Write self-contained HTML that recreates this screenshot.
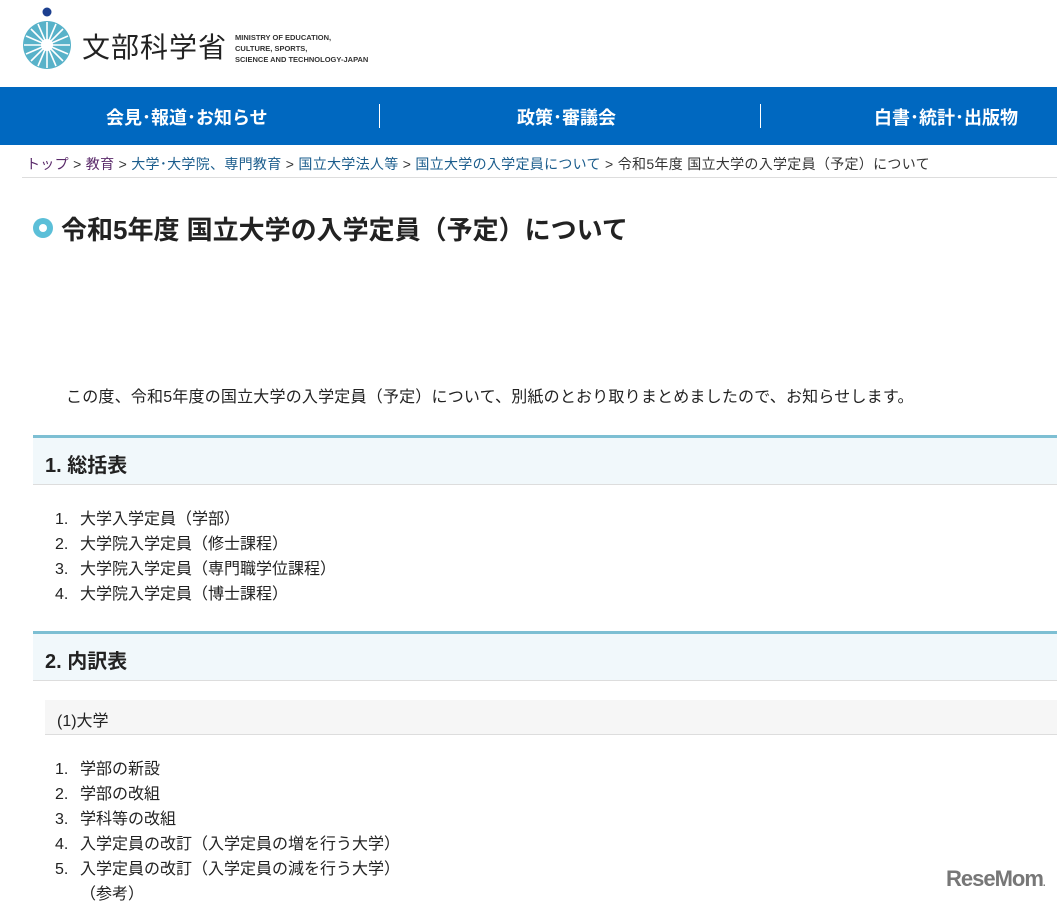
<!DOCTYPE html>
<html><head><meta charset="utf-8"><style>
*{margin:0;padding:0;box-sizing:border-box}
body{width:1057px;height:902px;overflow:hidden;background:#fff;font-family:"Liberation Sans","Noto Sans CJK JP",sans-serif;color:#222;position:relative}
.abs{position:absolute}
.nav{top:87px;left:0;width:1057px;height:58px;background:#0068c0}
.nav span{position:absolute;top:17px;color:#fff;font-size:18px;font-weight:bold}
.sep{position:absolute;top:17px;width:1px;height:24px;background:#fff}
.bc{top:154px;left:26px;font-size:14px;letter-spacing:0.3px;color:#333;white-space:nowrap}
.bc a{color:#1a5c8c;text-decoration:none}
.bc .v{color:#5a2a6a}
.h2{left:33px;width:1024px;height:50px;border-top:3px solid #7dbfd3;background:#f1f8fb;border-bottom:1px solid #ddd;font-size:20px;font-weight:bold;padding:11px 0 0 12px;color:#222}
.li{left:55px;font-size:16px;color:#222;white-space:nowrap}
.li b{font-weight:normal;display:inline-block;width:25px}
</style></head><body>
<svg class="abs" style="left:22px;top:5px" width="52" height="66" viewBox="0 0 52 66">
<circle cx="25" cy="7" r="4.5" fill="#1c3f8f"/>
<circle cx="25" cy="40" r="24" fill="#58b2c9"/>
<g stroke="#fff" stroke-width="1.6">
<line x1="25" y1="17" x2="25" y2="63"/><line x1="2" y1="40" x2="48" y2="40"/>
<line x1="9" y1="24" x2="41" y2="56"/><line x1="41" y1="24" x2="9" y2="56"/>
<line x1="16" y1="19" x2="34" y2="61"/><line x1="34" y1="19" x2="16" y2="61"/>
<line x1="4" y1="31" x2="46" y2="49"/><line x1="46" y1="31" x2="4" y2="49"/>
</g><circle cx="25" cy="40" r="6" fill="#fff"/>
</svg>
<div class="abs" style="left:82px;top:26px;font-size:28px;letter-spacing:1px;color:#222">文部科学省</div>
<div class="abs" style="left:235px;top:32px;font-size:7.5px;line-height:11px;font-weight:bold;color:#333">MINISTRY OF EDUCATION,<br>CULTURE, SPORTS,<br>SCIENCE AND TECHNOLOGY-JAPAN</div>
<div class="abs nav">
<span style="left:106px">会見･報道･お知らせ</span>
<div class="sep" style="left:379px"></div>
<span style="left:517px">政策･審議会</span>
<div class="sep" style="left:760px"></div>
<span style="left:874px">白書･統計･出版物</span>
</div>
<div class="abs bc"><span class="v">トップ</span> &gt; <span class="v">教育</span> &gt; <a>大学･大学院、専門教育</a> &gt; <a>国立大学法人等</a> &gt; <a>国立大学の入学定員について</a> &gt; 令和5年度 国立大学の入学定員（予定）について</div>
<div class="abs" style="top:177px;left:22px;width:1035px;height:1px;background:#ddd"></div>
<div class="abs" style="left:33px;top:218px;width:20px;height:20px;border-radius:50%;background:#5bbfd8"></div>
<div class="abs" style="left:39px;top:224px;width:8px;height:8px;border-radius:50%;background:#fff"></div>
<div class="abs" style="left:61px;top:210px;font-size:26px;font-weight:bold;color:#222;white-space:nowrap">令和5年度 国立大学の入学定員（予定）について</div>
<div class="abs" style="left:66px;top:383px;font-size:16px;letter-spacing:0.2px;white-space:nowrap">この度、令和5年度の国立大学の入学定員（予定）について、別紙のとおり取りまとめましたので、お知らせします。</div>
<div class="abs h2" style="top:435px">1. 総括表</div>
<div class="abs li" style="top:505px"><b>1.</b>大学入学定員（学部）</div>
<div class="abs li" style="top:530px"><b>2.</b>大学院入学定員（修士課程）</div>
<div class="abs li" style="top:555px"><b>3.</b>大学院入学定員（専門職学位課程）</div>
<div class="abs li" style="top:580px"><b>4.</b>大学院入学定員（博士課程）</div>
<div class="abs h2" style="top:631px">2. 内訳表</div>
<div class="abs" style="left:45px;top:700px;width:1012px;height:35px;background:#f6f6f6;border-bottom:1px solid #ddd;font-size:16px;padding:7px 0 0 12px">(1)大学</div>
<div class="abs li" style="top:755px"><b>1.</b>学部の新設</div>
<div class="abs li" style="top:780px"><b>2.</b>学部の改組</div>
<div class="abs li" style="top:805px"><b>3.</b>学科等の改組</div>
<div class="abs li" style="top:830px"><b>4.</b>入学定員の改訂（入学定員の増を行う大学）</div>
<div class="abs li" style="top:855px"><b>5.</b>入学定員の改訂（入学定員の減を行う大学）</div>
<div class="abs li" style="top:880px;left:80px">（参考）</div>
<div class="abs" style="left:946px;top:866px;font-size:22px;font-weight:bold;color:#777;letter-spacing:-1px">ReseMom<span style="font-size:10px">.</span></div>
</body></html>
